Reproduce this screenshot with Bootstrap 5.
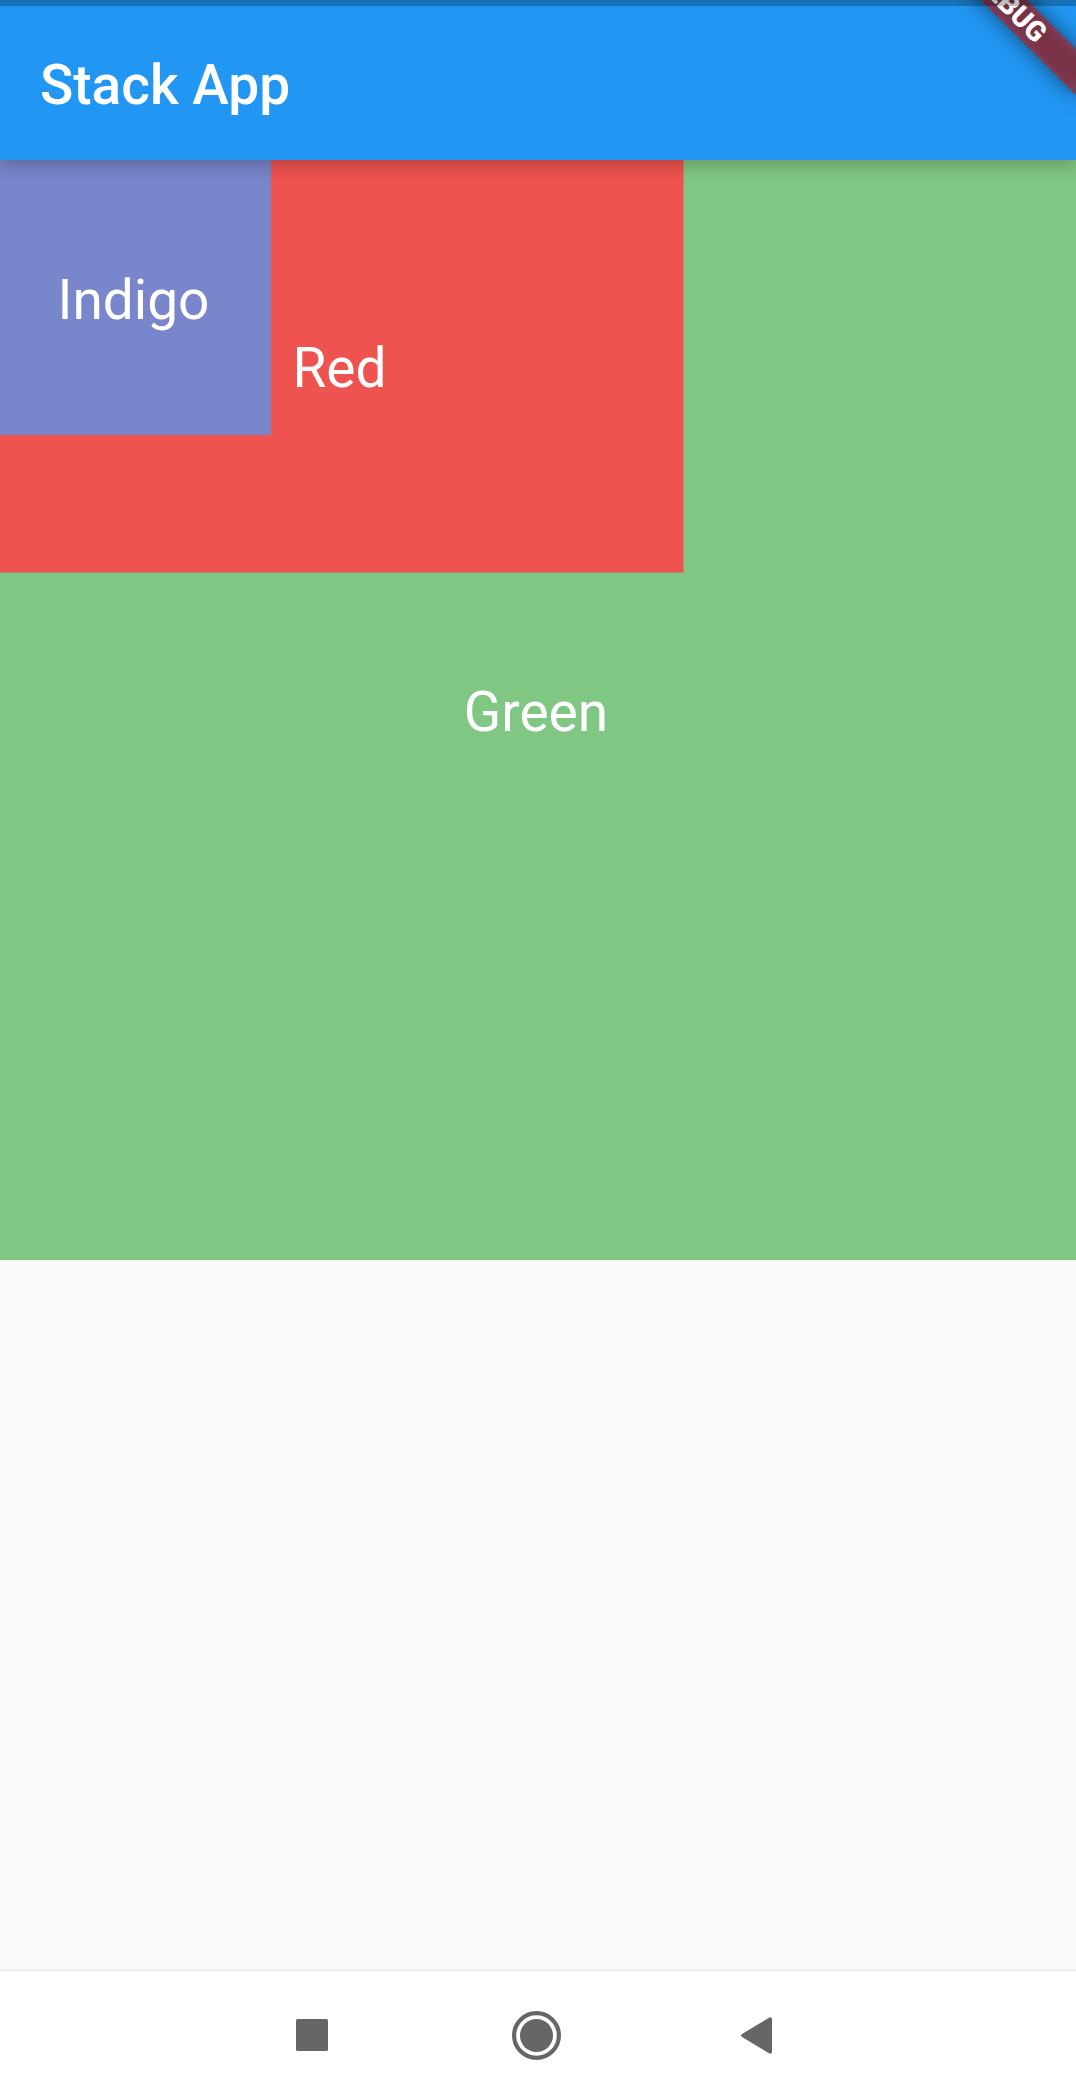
<!DOCTYPE html>
<html lang="en">
<head>
<meta charset="utf-8">
<meta name="viewport" content="width=device-width, initial-scale=1">
<title>Stack App</title>
<link href="https://cdn.jsdelivr.net/npm/bootstrap@5.3.0/dist/css/bootstrap.min.css" rel="stylesheet">
<style>
body { font-family: Roboto, sans-serif; background: #fafafa; color: #fff; }
.screen { width: 1076px; height: 2100px; }
.status-strip { height: 6px; background: rgba(0,0,0,.25); z-index: 5; }
.app-header { background: #2196f3; height: 160px; z-index: 2; padding: 6px 0 0 40px; box-shadow: 0 6px 16px rgba(0,0,0,.22); }
.app-title { font-size: 55px; font-weight: 500; line-height: 64px; padding-top: 4px; }
.debug-ribbon { z-index: 4; }
.stack-area { display: grid; width: 1080px; height: 1100px; margin-left: -4px; font-size: 55px; line-height: 64px; }
.stack-area > div { grid-area: 1 / 1; }
.stack-area span { padding-top: 4px; }
.tile-green { background: #81c784; }
.tile-red { background: #ef5350; width: 688px; height: 413px; border: solid #b88d6a; border-width: 0 1px 1px 0; }
.tile-indigo { background: #7986cb; width: 275px; height: 275px; }
.nav-keys { height: 130px; background: #fff; border-top: 1px solid #e3e3e3; }
</style>
</head>
<body>
<div class="screen d-flex flex-column position-relative overflow-hidden">
  <header class="app-header d-flex align-items-center position-relative flex-shrink-0">
    <h1 class="app-title m-0">Stack App</h1>
  </header>
  <div class="status-strip position-absolute top-0 start-0 w-100"></div>
  <svg class="debug-ribbon position-absolute top-0 end-0" width="240" height="240" viewBox="0 0 240 240" aria-label="Debug">
    <defs><filter id="soft" x="-30%" y="-200%" width="160%" height="500%"><feGaussianBlur stdDeviation="10.5"/></filter></defs>
    <g transform="translate(240 -60) rotate(45)">
      <rect x="-110" y="77" width="220" height="33" fill="#000" fill-opacity=".5" filter="url(#soft)"/>
      <rect x="-110" y="77" width="221" height="33" fill="#b71c1c" fill-opacity=".627"/>
      <text x="0" y="102.5" text-anchor="middle" font-family="Roboto, sans-serif" font-size="28.05" font-weight="900" fill="#fff">DEBUG</text>
    </g>
  </svg>
  <main class="flex-grow-1">
    <div class="stack-area">
      <div class="tile-green d-flex align-items-center justify-content-center"><span>Green</span></div>
      <div class="tile-red d-flex align-items-center justify-content-center"><span>Red</span></div>
      <div class="tile-indigo d-flex align-items-center justify-content-center"><span>Indigo</span></div>
    </div>
  </main>
  <nav class="nav-keys flex-shrink-0">
    <svg class="d-block" width="1076" height="129" viewBox="0 1971 1076 129" fill="#666">
      <rect x="296" y="2019" width="32" height="32" rx="1.5"/>
      <circle cx="536.5" cy="2035.5" r="22.4" fill="none" stroke="#666" stroke-width="4.2"/>
      <circle cx="536.5" cy="2035.5" r="16.5"/>
      <path d="M742 2034 L768.5 2018 Q772 2016 772 2019.500 V2051.500 Q772 2055 768.500 2053 L742 2037 Q740 2035.500 742 2034Z"/>
    </svg>
  </nav>
</div>
<script src="https://cdn.jsdelivr.net/npm/bootstrap@5.3.0/dist/js/bootstrap.bundle.min.js"></script>
</body>
</html>
